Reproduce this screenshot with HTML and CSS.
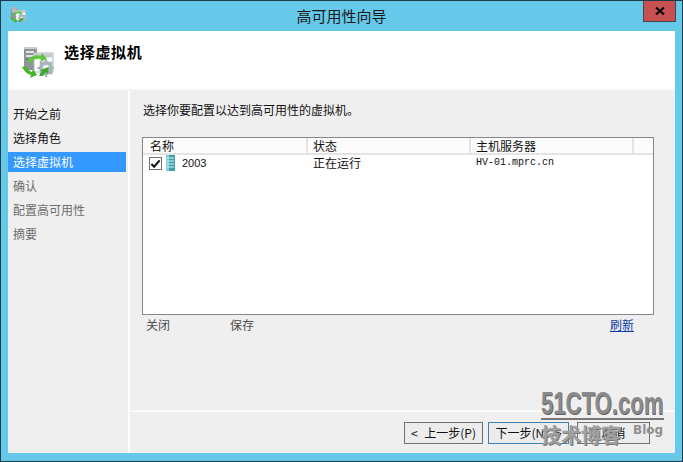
FILE: index.html
```html
<!DOCTYPE html>
<html lang="zh-CN">
<head>
<meta charset="utf-8">
<title>高可用性向导</title>
<link rel="stylesheet" href="styles.css">
</head>
<body>
<svg class="defs" width="0" height="0" aria-hidden="true">
  <symbol id="wizard" viewBox="0 0 32 32">
    <rect x="2" y="1" width="13" height="23" fill="#8f9596"/>
    <rect x="2" y="1" width="13" height="2" fill="#c9cdce"/>
    <rect x="4" y="5" width="8" height="2" fill="#e2e4e4"/>
    <rect x="4" y="9" width="8" height="2" fill="#e2e4e4"/>
    <rect x="4" y="13" width="8" height="1" fill="#5f6566"/>
    <rect x="12" y="7" width="19" height="19" fill="#fafcfd" stroke="#b4bcc2" stroke-width="1"/>
    <rect x="12.500" y="7.500" width="18" height="4" fill="#c3cad0"/>
    <circle cx="24" cy="22" r="7" fill="#a9b5bf"/>
    <circle cx="24" cy="22" r="3.200" fill="#f1f4f6"/>
    <path d="M24 13.500v3M24 27.500v3.500M15.500 22h3M29.500 22h2M18 16l2 2M28 26l2 2M30 16l-2 2M20 26l-2 2" stroke="#a0acb6" stroke-width="2"/>
    <path d="M5 15c3-5 9-7 14-5l1-3 5 6-7 3 1-3c-4-1-8 0-11 4z" fill="#5fc63d"/>
    <path d="M0 21l4-1c1 3 3 5 6 6l1-3 4 6-7 3 1-3c-4-1-7-4-9-8z" fill="#46b52e"/>
    <path d="M17 30l3-5-2-1 9-3-1 7-2-2-3 4z" fill="#3eaa2a"/>
  </symbol>
</svg>
<div class="window">
  <header class="titlebar">
    <svg class="app-icon"><use href="#wizard"/></svg>
    <span class="title">高可用性向导</span>
    <button class="close" type="button"><svg viewBox="0 0 10 8" width="10" height="8"><path d="M1 .5l8 7M9 .5l-8 7" stroke="#000" stroke-width="2"/></svg></button>
  </header>
  <section class="banner">
    <svg class="banner-icon"><use href="#wizard"/></svg>
    <h1>选择虚拟机</h1>
  </section>
  <div class="body">
    <nav class="steps">
      <div class="step">开始之前</div>
      <div class="step">选择角色</div>
      <div class="step current">选择虚拟机</div>
      <div class="step off">确认</div>
      <div class="step off">配置高可用性</div>
      <div class="step off">摘要</div>
    </nav>
    <main class="main">
      <div class="content">
        <p class="lead">选择你要配置以达到高可用性的虚拟机。</p>
        <div class="list">
          <div class="cols">
            <div class="col c1">名称</div>
            <div class="col c2">状态</div>
            <div class="col c3">主机服务器</div>
            <div class="col-rest"></div>
          </div>
          <div class="row">
            <div class="c1 vm">
              <span class="check"><svg viewBox="0 0 12 12" width="11" height="11"><path d="M1.500 6.500l3 3 6-7" fill="none" stroke="#111" stroke-width="2.200"/></svg></span>
              <svg class="disk" viewBox="0 0 9 16" width="9" height="16">
                <rect width="9" height="16" fill="#3f9fae"/>
                <rect x="0" width="3" height="16" fill="#7fd0da"/>
                <path d="M1 3h7M1 6h7M1 9h7M1 12h7" stroke="#d7f1f4" stroke-width="1"/>
              </svg>
              <span class="vm-name">2003</span>
            </div>
            <div class="c2 cell">正在运行</div>
            <div class="c3 cell host">HV-01.mprc.cn</div>
          </div>
        </div>
        <div class="actions">
          <span class="act a1">关闭</span>
          <span class="act a2">保存</span>
          <a class="refresh" href="#">刷新</a>
        </div>
      </div>
      <footer class="buttons">
        <button class="btn prev" type="button">&lt; 上一步(P)</button>
        <button class="btn next" type="button">下一步(N) &gt;</button>
        <button class="btn cancel" type="button">取消</button>
      </footer>
    </main>
  </div>
  <div class="mark">
    <div class="mark-top"><span class="mark-logo">51CTO.com</span></div>
    <div class="mark-sub">技术博客</div>
    <div class="mark-blog">Blog</div>
  </div>
</div>
</body>
</html>
```
FILE: styles.css
```css
* { box-sizing: border-box; }
html, body { margin: 0; padding: 0; }
body { width: 683px; height: 462px; overflow: hidden; font: 12px/16px "Noto Sans CJK SC", "Liberation Sans", sans-serif; color: #111; }
.defs { position: absolute; }
.window { position: relative; width: 683px; height: 462px; background: #66c9ea; border: 1px solid #1c3b4b; padding: 0 7px 8px; display: flex; flex-direction: column; }
.titlebar { height: 30px; flex: none; position: relative; display: flex; justify-content: center; align-items: center; padding-bottom: 1px; }
.app-icon { position: absolute; left: 2px; top: 6px; width: 16px; height: 16px; }
.title { font-size: 15px; color: #1a1a1a; }
.close { position: absolute; right: -1px; top: 0; width: 33px; height: 21px; padding: 0; background: #c75050; border: 1px solid #48454a; border-top: 0; display: flex; align-items: center; justify-content: center; }
.banner { height: 58px; flex: none; background: #fff; display: flex; padding: 15px 0 0 14px; }
.banner-icon { width: 32px; height: 32px; flex: none; }
h1 { margin: -3px 0 0 10px; font-size: 15px; line-height: 18px; font-weight: 700; color: #000; letter-spacing: .7px; }
.body { flex: 1; min-height: 0; display: flex; margin-top: 2px; background: #fff; box-shadow: 0 -2px 0 #f4f4f4; }
.steps { width: 120px; flex: none; background: #efefef; padding-top: 13px; display: flex; flex-direction: column; gap: 4px; }
.step { height: 20px; line-height: 20px; padding-left: 5px; margin-right: 2px; color: #111; }
.step.current { background: #3399ff; color: #fff; }
.step.off { color: #6d6d6d; }
.main { flex: 1; min-width: 0; margin-left: 2px; background: #efefef; display: flex; flex-direction: column; }
.content { flex: 1; min-height: 0; padding: 11px 21px 0 12px; border-bottom: 2px solid #fafafa; }
.lead { margin: 0 0 19px 1px; height: 16px; color: #111; }
.list { height: 178px; background: #fff; border: 1px solid #86868a; }
.cols { display: flex; height: 17px; border-bottom: 2px solid #e4e4e4; background: #fcfcfc; }
.col { height: 15px; line-height: 15px; border-right: 2px solid #e4e4e4; color: #111; }
.c1 { width: 165px; padding-left: 7px; flex: none; }
.c2 { width: 163px; padding-left: 5px; flex: none; }
.c3 { width: 163px; padding-left: 5px; flex: none; }
.col-rest { flex: 1; }
.row { display: flex; height: 16px; align-items: center; }
.vm { display: flex; align-items: center; padding-left: 6px; }
.check { width: 13px; height: 13px; background: #fff; border: 1px solid #6f6f6f; display: flex; align-items: center; justify-content: center; flex: none; }
.disk { margin-left: 4px; flex: none; }
.vm-name { margin-left: 7px; font: 11px/16px "Liberation Sans", sans-serif; }
.cell { line-height: 16px; }
.host { font: 10px/16px "Liberation Mono", monospace; }
.actions { display: flex; align-items: center; height: 20px; padding-left: 4px; }
.act { color: #4d4d4d; }
.a1 { width: 84px; }
.a2 { width: 380px; }
.refresh { color: #0a3ca8; text-decoration: underline; }
.buttons { flex: none; height: 41px; display: flex; padding: 10px 0 0 274px; align-items: flex-start; }
.btn { height: 22px; padding: 0; margin: 0; background: #ececec; border: 1px solid #707070; font: 12px/18px "Noto Sans CJK SC", sans-serif; color: #111; flex: none; word-spacing: 4px; }
.prev { width: 79px; }
.next { width: 81px; margin-left: 5px; border-color: #3c7fb1; }
.cancel { width: 73px; margin-left: 8px; }
.mark { position: absolute; left: 540px; top: 388px; width: 130px; height: 60px; pointer-events: none; color: #8a8a8a; }
.mark-top { border-bottom: 2px solid #777; height: 31px; width: 123px; }
.mark-logo { display: block; width: 178px; font: 700 32px/28px "Liberation Sans", sans-serif; text-shadow: 1px 1px 0 #5f5f5f; white-space: nowrap; transform: scaleX(.69); transform-origin: left center; }
.mark-sub { position: absolute; left: 0; top: 34px; font: 700 20px/24px "Noto Sans CJK SC", sans-serif; color: #a0a0a0; text-shadow: 1px 1px 0 #777; white-space: nowrap; }
.mark-blog { position: absolute; left: 92px; top: 34px; font: 700 12px/14px "DejaVu Sans", sans-serif; color: #8f8f8f; }
```
